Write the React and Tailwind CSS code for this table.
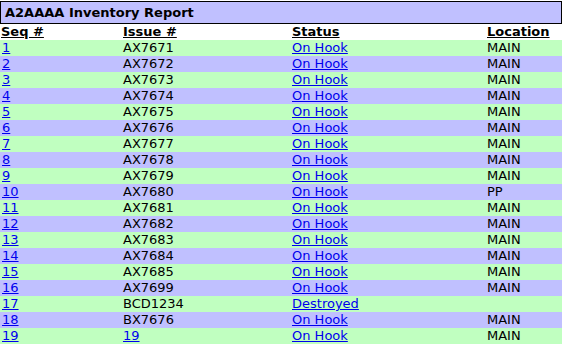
const rows = [
  ["1", "AX7671", "On Hook", "MAIN"],
  ["2", "AX7672", "On Hook", "MAIN"],
  ["3", "AX7673", "On Hook", "MAIN"],
  ["4", "AX7674", "On Hook", "MAIN"],
  ["5", "AX7675", "On Hook", "MAIN"],
  ["6", "AX7676", "On Hook", "MAIN"],
  ["7", "AX7677", "On Hook", "MAIN"],
  ["8", "AX7678", "On Hook", "MAIN"],
  ["9", "AX7679", "On Hook", "MAIN"],
  ["10", "AX7680", "On Hook", "PP"],
  ["11", "AX7681", "On Hook", "MAIN"],
  ["12", "AX7682", "On Hook", "MAIN"],
  ["13", "AX7683", "On Hook", "MAIN"],
  ["14", "AX7684", "On Hook", "MAIN"],
  ["15", "AX7685", "On Hook", "MAIN"],
  ["16", "AX7699", "On Hook", "MAIN"],
  ["17", "BCD1234", "Destroyed", ""],
  ["18", "BX7676", "On Hook", "MAIN"],
  ["19", "19", "On Hook", "MAIN", true],
];

const cols = "grid grid-cols-[122px_169px_195px_1fr]";

export default function App() {
  return (
    <div className="min-h-[351px] w-[562px] bg-white pt-px font-['Verdana','DejaVu_Sans',sans-serif] text-[13px] text-black">
      <div className="flex h-[23px] items-center border border-black bg-[#c0c0ff] px-1 font-bold">
        A2AAAA Inventory Report
      </div>

      <div className={`${cols} h-4 items-center font-bold leading-4`}>
        <span className="pl-px underline">Seq #</span>
        <span className="pl-px underline">Issue #</span>
        <span className="pl-px underline">Status</span>
        <span className="pl-px underline">Location</span>
      </div>

      {rows.map(([seq, issue, status, location, issueLink], i) => (
        <div
          key={seq}
          className={`${cols} h-4 items-center leading-4 ${i % 2 === 0 ? "bg-[#c0ffc0]" : "bg-[#c0c0ff]"}`}
        >
          <a href="#" className="pl-0.5 text-[#0000ee] underline">
            {seq}
          </a>
          {issueLink ? (
            <a href="#" className="pl-px text-[#0000ee] underline">
              {issue}
            </a>
          ) : (
            <span className="pl-px">{issue}</span>
          )}
          <a href="#" className="pl-px text-[#0000ee] underline">
            {status}
          </a>
          <span className="pl-px">{location}</span>
        </div>
      ))}
    </div>
  );
}
